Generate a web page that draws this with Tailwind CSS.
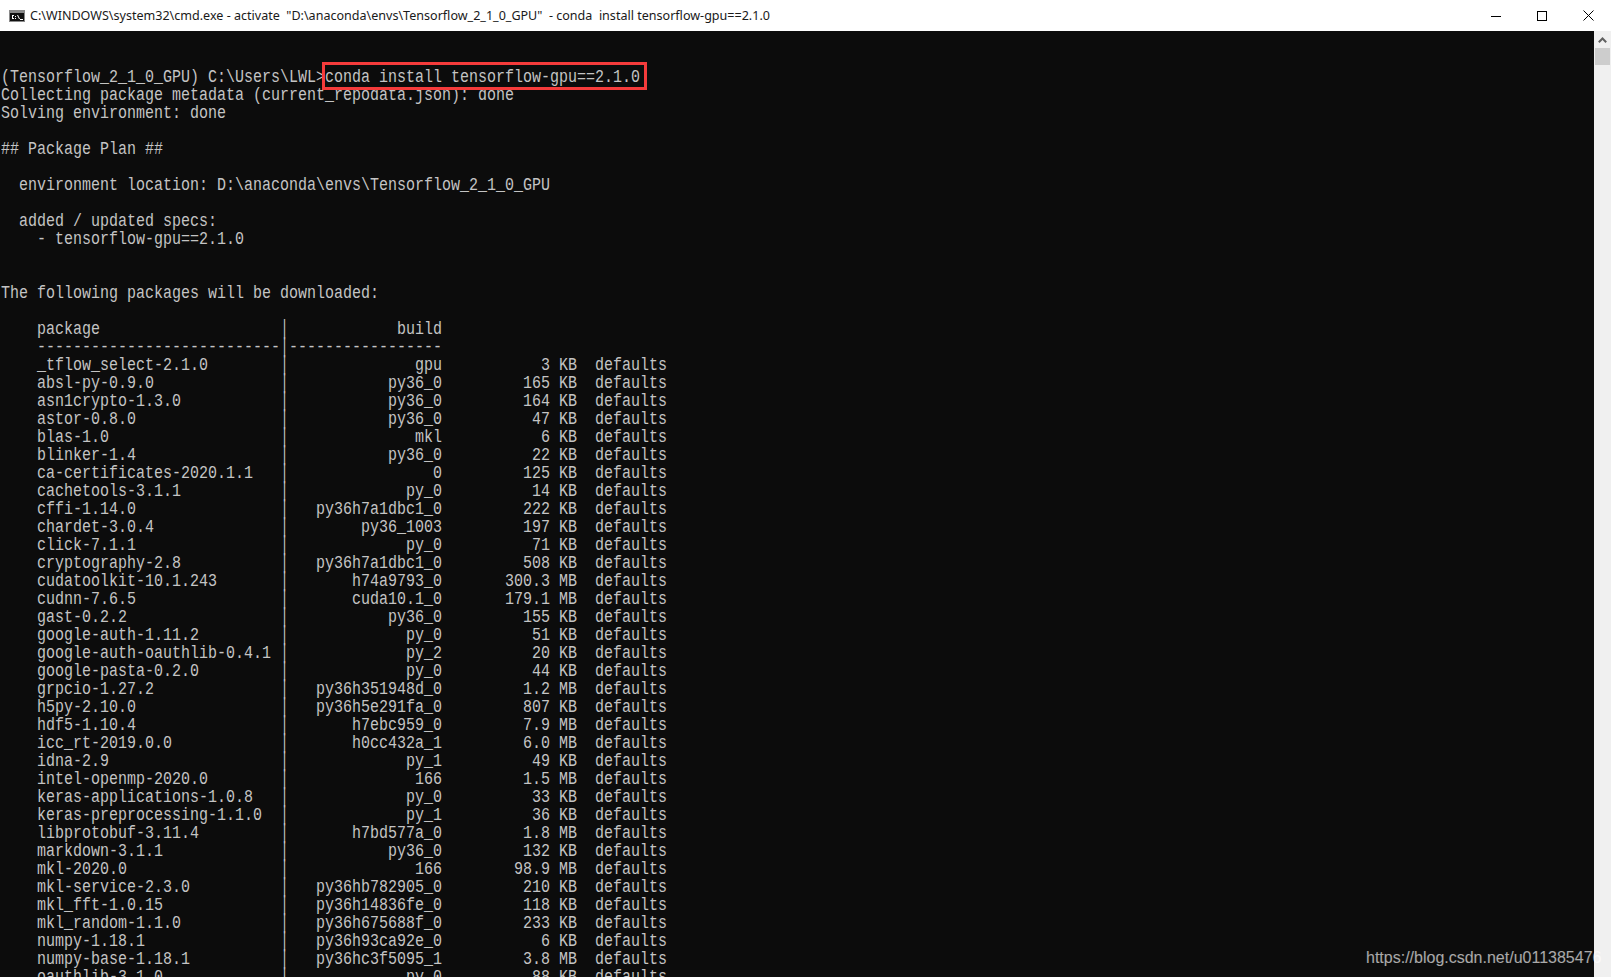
<!DOCTYPE html>
<html lang="en">
<head>
<meta charset="UTF-8">
<title>cmd.exe</title>
<script src="https://cdn.jsdelivr.net/npm/@tailwindcss/browser@4"></script>
</head>
<body class="relative flex flex-col h-[977px] w-[1611px] overflow-hidden bg-[#0c0c0c]">

	<!-- title bar -->
	<div class="flex items-center h-[31px] shrink-0 bg-white pl-[9px] text-black">
		<svg class="w-[16px] h-[12px] shrink-0" viewBox="0 0 16 12">
			<rect width="16" height="12" fill="#8a8a8a"/>
			<rect x="1" y="3" width="14" height="8" fill="#111111"/>
			<path d="M3 5h2v1H3zM3 6h1v2H3zM3 8h2v1H3zM6 6h1v1H6zM6 8h1v1H6zM11 9h3v1h-3z" fill="#fff" stroke="none"/>
			<path d="M8.500 5l2 4" stroke="#fff" stroke-width="1" fill="none"/>
		</svg>
		<div class="ml-[5px] flex-1 whitespace-pre pt-px font-['Noto_Sans',sans-serif] text-[12.55px] leading-none text-[#1a1a1a]">C:\WINDOWS\system32\cmd.exe - activate  "D:\anaconda\envs\Tensorflow_2_1_0_GPU"  - conda  install tensorflow-gpu==2.1.0</div>
		<div class="flex items-center h-full">
			<div class="flex items-center justify-center w-[46px] h-full">
				<svg class="w-[10px] h-[10px]" viewBox="0 0 10 10"><path d="M0 5.500h10" stroke="#000" stroke-width="1"/></svg>
			</div>
			<div class="flex items-center justify-center w-[46px] h-full">
				<svg class="w-[10px] h-[10px]" viewBox="0 0 10 10"><rect x="0.500" y="0.500" width="9" height="9" fill="none" stroke="#000" stroke-width="1"/></svg>
			</div>
			<div class="flex items-center justify-center w-[46px] h-full">
				<svg class="w-[11px] h-[11px]" viewBox="0 0 11 11"><path d="M0.500 0.500l10 10M10.500 0.500l-10 10" stroke="#000" stroke-width="1"/></svg>
			</div>
		</div>
	</div>

	<!-- console + scrollbar -->
	<div class="flex flex-1 min-h-0">
		<div class="flex-1 min-w-0 overflow-hidden pl-px">
			<pre id="console" class="w-[120%] origin-top-left scale-x-[0.8333] pt-[37px] font-['Liberation_Mono',monospace] text-[18px] leading-[18px] text-[#c4c4c4]"></pre>
		</div>
		<div class="flex flex-col items-center w-[17px] shrink-0 bg-[#f0f0f0]">
			<div class="flex items-center justify-center h-[17px] w-full">
				<svg class="w-[9px] h-[6px]" viewBox="0 0 9 6"><path d="M0.800 5.200L4.500 1.500l3.700 3.700" fill="none" stroke="#606060" stroke-width="2"/></svg>
			</div>
			<div class="w-[15px] h-[17px] bg-[#cdcdcd]"></div>
		</div>
	</div>

	<!-- red annotation box -->
	<div class="absolute left-[322px] top-[62px] w-[325px] h-[28px] border-[3px] border-[#f53b3b]"></div>

	<!-- watermark -->
	<div class="absolute left-[1366px] top-[948px] whitespace-nowrap font-['Liberation_Sans',sans-serif] text-[16px] leading-[20px] text-white/65">https://blog.csdn.net/u011385476</div>

	<script>
	var rows = [
		["_tflow_select-2.1.0", "gpu", "3 KB"],
		["absl-py-0.9.0", "py36_0", "165 KB"],
		["asn1crypto-1.3.0", "py36_0", "164 KB"],
		["astor-0.8.0", "py36_0", "47 KB"],
		["blas-1.0", "mkl", "6 KB"],
		["blinker-1.4", "py36_0", "22 KB"],
		["ca-certificates-2020.1.1", "0", "125 KB"],
		["cachetools-3.1.1", "py_0", "14 KB"],
		["cffi-1.14.0", "py36h7a1dbc1_0", "222 KB"],
		["chardet-3.0.4", "py36_1003", "197 KB"],
		["click-7.1.1", "py_0", "71 KB"],
		["cryptography-2.8", "py36h7a1dbc1_0", "508 KB"],
		["cudatoolkit-10.1.243", "h74a9793_0", "300.3 MB"],
		["cudnn-7.6.5", "cuda10.1_0", "179.1 MB"],
		["gast-0.2.2", "py36_0", "155 KB"],
		["google-auth-1.11.2", "py_0", "51 KB"],
		["google-auth-oauthlib-0.4.1", "py_2", "20 KB"],
		["google-pasta-0.2.0", "py_0", "44 KB"],
		["grpcio-1.27.2", "py36h351948d_0", "1.2 MB"],
		["h5py-2.10.0", "py36h5e291fa_0", "807 KB"],
		["hdf5-1.10.4", "h7ebc959_0", "7.9 MB"],
		["icc_rt-2019.0.0", "h0cc432a_1", "6.0 MB"],
		["idna-2.9", "py_1", "49 KB"],
		["intel-openmp-2020.0", "166", "1.5 MB"],
		["keras-applications-1.0.8", "py_0", "33 KB"],
		["keras-preprocessing-1.1.0", "py_1", "36 KB"],
		["libprotobuf-3.11.4", "h7bd577a_0", "1.8 MB"],
		["markdown-3.1.1", "py36_0", "132 KB"],
		["mkl-2020.0", "166", "98.9 MB"],
		["mkl-service-2.3.0", "py36hb782905_0", "210 KB"],
		["mkl_fft-1.0.15", "py36h14836fe_0", "118 KB"],
		["mkl_random-1.1.0", "py36h675688f_0", "233 KB"],
		["numpy-1.18.1", "py36h93ca92e_0", "6 KB"],
		["numpy-base-1.18.1", "py36hc3f5095_1", "3.8 MB"],
		["oauthlib-3.1.0", "py_0", "88 KB"]
	];

	var lines = [
		"(Tensorflow_2_1_0_GPU) C:\\Users\\LWL>conda install tensorflow-gpu==2.1.0",
		"Collecting package metadata (current_repodata.json): done",
		"Solving environment: done",
		"",
		"## Package Plan ##",
		"",
		"  environment location: D:\\anaconda\\envs\\Tensorflow_2_1_0_GPU",
		"",
		"  added / updated specs:",
		"    - tensorflow-gpu==2.1.0",
		"",
		"",
		"The following packages will be downloaded:",
		"",
		"    " + "package".padEnd(27) + "\u2502" + "build".padStart(17),
		"    " + "-".repeat(27) + "\u2502" + "-".repeat(17)
	];

	rows.forEach(function (r) {
		lines.push("    " + r[0].padEnd(27) + "\u2502" + r[1].padStart(17) + r[2].padStart(15) + "  defaults");
	});

	document.getElementById("console").textContent = lines.join("\n");
	</script>
</body>
</html>
